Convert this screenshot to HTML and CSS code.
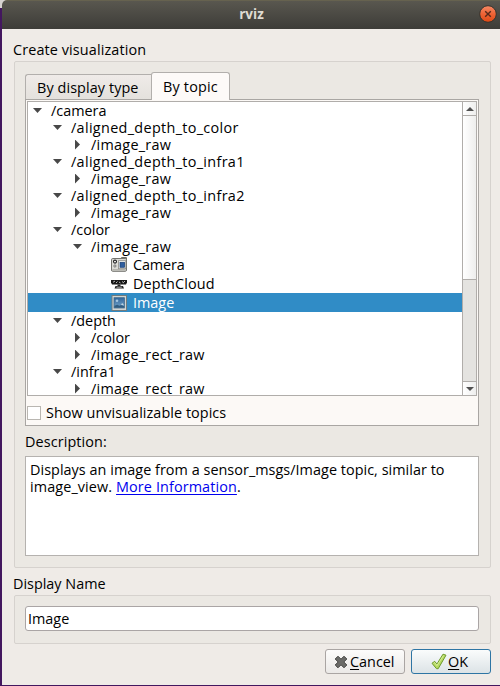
FILE: index.html
```
<!DOCTYPE html>
<html lang="en">
<head>
<meta charset="utf-8">
<title>rviz</title>
<link rel="stylesheet" href="styles.css">
</head>
<body>
<div class="window">
  <header class="titlebar">
    <span class="title">rviz</span>
    <svg class="close" width="18" height="18" viewBox="0 0 18 18">
      <defs><linearGradient id="orange" x1="0" y1="0" x2="0" y2="1"><stop offset="0" stop-color="#f58a66"/><stop offset=".5" stop-color="#ee6335"/><stop offset="1" stop-color="#dd4814"/></linearGradient></defs>
      <circle cx="9" cy="9" r="8.3" fill="url(#orange)" stroke="#35332d" stroke-width="1"/>
      <path d="M6.2 6.2l5.6 5.6M11.8 6.2l-5.6 5.6" stroke="#57291a" stroke-width="1.4"/>
    </svg>
  </header>
  <main class="content">
    <h2 class="heading create">Create visualization</h2>
    <section class="group visualization">
      <nav class="tabs">
        <div class="tab">By display type</div>
        <div class="tab active">By topic</div>
      </nav>
      <div class="pane">
        <div class="tree">
          <div class="rows">
            <div class="row l0"><i class="down"></i><span>/camera</span></div>
            <div class="row l1"><i class="down"></i><span class="aligned">/aligned_depth_to_color</span></div>
            <div class="row l2"><i class="right"></i><span class="snake">/image_raw</span></div>
            <div class="row l1"><i class="down"></i><span class="aligned">/aligned_depth_to_infra1</span></div>
            <div class="row l2"><i class="right"></i><span class="snake">/image_raw</span></div>
            <div class="row l1"><i class="down"></i><span class="aligned">/aligned_depth_to_infra2</span></div>
            <div class="row l2"><i class="right"></i><span class="snake">/image_raw</span></div>
            <div class="row l1"><i class="down"></i><span>/color</span></div>
            <div class="row l2"><i class="down"></i><span class="snake">/image_raw</span></div>
            <div class="row leaf">
              <svg width="16" height="16" viewBox="0 0 16 16">
                <path d="M10.5 1.5V.6h4.9V3" fill="#8a8a84" stroke="#62625d"/>
                <rect x=".5" y="1.5" width="15" height="12.8" rx="1.3" fill="#dcdcd7" stroke="#73736e"/>
                <path d="M1.5 12.8h13" stroke="#b5b4ae" stroke-width="1.6"/>
                <circle cx="4" cy="4.6" r="1.5" fill="#fff" stroke="#222" stroke-width="1.1"/>
                <circle cx="3.9" cy="9" r="1.1" fill="#f4f4f0" stroke="#666" stroke-width=".9"/>
                <rect x="7.5" y="3.7" width="7.3" height="8" fill="#f8f8f4" stroke="#8b8b86" stroke-width=".8"/>
                <rect x="9" y="5.3" width="4.6" height="5" fill="#2f5e9e" stroke="#173d73" stroke-width=".7"/>
              </svg><span class="camera">Camera</span>
            </div>
            <div class="row leaf">
              <svg width="16" height="16" viewBox="0 0 16 16">
                <path d="M0 4h16v2.5l-1 2H1l-1-2z" fill="#171717"/>
                <path d="M2 6.3l2-1.3M5 7l1.5-1.5M8 6l1.5 1M11 5.5l2 1.5M13 5l1 1" stroke="#ccc" stroke-width=".9"/>
                <path d="M6.5 8.5h3V10H12l1 2.6H3.5L4.5 10h2z" fill="#242424"/>
                <path d="M5.5 11.2h5.3" stroke="#bbb" stroke-width=".9"/>
              </svg><span class="cloud">DepthCloud</span>
            </div>
            <div class="row leaf selected">
              <svg width="16" height="16" viewBox="0 0 16 16">
                <defs><linearGradient id="sky" x1="0" y1="0" x2="0" y2="1"><stop offset="0" stop-color="#32659a"/><stop offset="1" stop-color="#75a7cc"/></linearGradient></defs>
                <rect x="1" y=".5" width="14.5" height="15" fill="#d0d5d4" stroke="#717b7d"/>
                <rect x="3" y="2.7" width="10.5" height="10.3" fill="url(#sky)" stroke="#396486" stroke-width=".7"/>
                <path d="M3.3 10.8l3-1 2.2 1 1.5-.8 3.2 1.2v1.5H3.3z" fill="#315c80"/>
                <path d="M10 9.8l1.2-1.8 1.8 2.3" fill="#c4d9e4"/><circle cx="6" cy="5.8" r="1.3" fill="#a3c7e2"/>
              </svg><span>Image</span>
            </div>
            <div class="row l1"><i class="down"></i><span>/depth</span></div>
            <div class="row l2"><i class="right"></i><span>/color</span></div>
            <div class="row l2"><i class="right"></i><span class="snake">/image_rect_raw</span></div>
            <div class="row l1"><i class="down"></i><span>/infra1</span></div>
            <div class="row l2"><i class="right"></i><span class="snake">/image_rect_raw</span></div>
          </div>
          <div class="scrollbar">
            <div class="step"><svg width="8" height="4" viewBox="0 0 8 4"><path d="M4 0l4 4H0z" fill="#505050"/></svg></div>
            <div class="thumb"></div>
            <div class="trough"></div>
            <div class="step"><svg width="8" height="4" viewBox="0 0 8 4"><path d="M0 0h8L4 4z" fill="#505050"/></svg></div>
          </div>
        </div>
        <label class="check"><span class="box"></span><span>Show unvisualizable topics</span></label>
      </div>
      <h3 class="heading description">Description:</h3>
      <div class="details">Displays an image from a sensor_msgs/Image topic, similar to<br><span class="second">image_view. <a class="link">More Information</a>.</span></div>
    </section>
    <h2 class="heading name">Display Name</h2>
    <section class="group naming"><div class="input">Image</div></section>
    <footer class="buttons">
      <div class="button cancel">
        <svg width="14" height="14" viewBox="0 0 14 14"><path d="M4 1.2l3 3 3-3 2.8 2.8-3 3 3 3-2.8 2.8-3-3-3 3L1.2 10l3-3-3-3z" fill="#6b6b68" stroke="#454543" stroke-linejoin="round"/></svg>
        <span><u>C</u>ancel</span>
      </div>
      <div class="button ok">
        <svg width="16" height="17" viewBox="0 0 16 17"><path d="M1 10.3l2.7-2 2.2 2.8L12 1.2l3 1L7.2 15.7H5.5z" fill="#b6da62" stroke="#6d9a2c" stroke-linejoin="round"/><path d="M2.6 10.2l1-.7 2.3 3.1 6.6-10" fill="none" stroke="#daf0a0" stroke-width=".9"/></svg>
        <span><u>O</u>K</span>
      </div>
    </footer>
  </main>
</div>
</body>
</html>
```
FILE: styles.css
```
* { box-sizing: border-box; }
body {
  margin: 0;
  height: 686px;
  padding: 0 0 1px 2px;
  overflow: hidden;
  background: linear-gradient(#d6d2d0 0 8px, #43175f 8px);
  color: #000;
  font: 14.4px/17px "Open Sans", "Noto Sans", sans-serif;
  white-space: nowrap;
}
.window { height: 685px; background: #efebe7; border-top-left-radius: 5px; overflow: hidden; }
.titlebar {
  height: 29px;
  display: grid;
  grid-template-columns: 1fr auto 1fr;
  align-items: center;
  padding: 0 3px 1px 0;
  background: linear-gradient(#66624f 0 1px, #59574f 1px, #3d3c38);
}
.title { grid-column: 2; padding-left: 4px; font-size: 13.5px; font-weight: 700; color: #dfdbd2; }
.close { justify-self: end; }
.content { padding: 12px 9px 0 12px; }
.heading { margin: 0 0 0 -1px; font-size: 14.4px; font-weight: 400; height: 20px; line-height: 17px; }
.create { letter-spacing: .12px; }
.group { border: 1px solid #d6d2ce; border-radius: 2px; background: #ebe8e3; padding: 10px 11px 0 10px; }
.visualization { height: 507px; }
.tabs { height: 27px; display: flex; align-items: flex-end; }
.tab {
  height: 25px;
  width: 126px;
  padding: 4px 0 0 11px;
  border: 1px solid #b2afac;
  border-right: 0;
  border-bottom: 0;
  border-radius: 3px 0 0 0;
  background: linear-gradient(#efebe8, #e4e1dd);
  letter-spacing: .09px;
}
.tab.active {
  position: relative;
  height: 28px;
  width: 79px;
  margin-bottom: -1px;
  padding: 5px 0 0 11px;
  border-right: 1px solid #b2afac;
  border-radius: 3px 3px 0 0;
  background: #fdfaf8;
  letter-spacing: .2px;
}
.pane { height: 327px; border: 1px solid #a9a6a3; background: #fcf9f6; padding: 1px; }
.tree { height: 295px; display: flex; border: 1px solid #b0adaa; background: #fff; overflow: hidden; }
.rows { flex: 1; overflow: hidden; }
.row { height: 17px; display: flex; align-items: center; }
.row i { flex: none; width: 9px; height: 10px; margin-right: 9px; background: #484848; }
.down { clip-path: polygon(0 25%, 100% 25%, 50% 75%); }
.right { clip-path: polygon(22% 0, 78% 50%, 22% 100%); }
.l0 { padding-left: 5px; }
.l1 { padding-left: 25px; }
.l2 { padding-left: 45px; }
.leaf { height: 19px; padding-left: 83px; gap: 6px; }
.leaf svg { flex: none; }
.selected { background: #308cc6; color: #fff; }
.snake { letter-spacing: .27px; }
.aligned { letter-spacing: .33px; }
.camera { letter-spacing: -.1px; }
.cloud { letter-spacing: .15px; }
.scrollbar { width: 14px; display: flex; flex-direction: column; border-left: 1px solid #b0adaa; }
.step { height: 13px; display: flex; align-items: center; justify-content: center; background: linear-gradient(90deg, #fff, #eeeeed); }
.thumb { height: 165px; border: solid #b0adaa; border-width: 1px 0; background: linear-gradient(90deg, #fff, #eeeeed); }
.trough { flex: 1; border-bottom: 1px solid #b0adaa; background: #e4e3e0; }
.check { display: flex; align-items: center; gap: 5px; padding-top: 8px; letter-spacing: .06px; }
.box { width: 14px; height: 14px; border: 1px solid #b9b6b1; background: #fff; }
.description { margin: 7px 0 0; height: 23px; letter-spacing: .1px; }
.details { height: 100px; border: 1px solid #b5b2af; background: #fff; padding: 4px; letter-spacing: .04px; }
.second { letter-spacing: .11px; }
.link { color: #00e; text-decoration: underline; text-underline-offset: 2px; }
.name { margin-top: 7px; }
.naming { height: 49px; }
.input { height: 25px; border: 1px solid #aaa5a5; border-radius: 3px; background: #fff; padding: 3px 2px; }
.buttons { display: flex; justify-content: flex-end; gap: 6px; padding-top: 5px; }
.button {
  width: 80px;
  height: 25px;
  display: flex;
  align-items: center;
  border: 1px solid #aaa5a3;
  border-radius: 3px;
  background: linear-gradient(#fdfcfb, #ebe9e7);
}
.button u { text-underline-offset: 2px; }
.cancel { padding-left: 8px; gap: 2px; }
.ok { padding-left: 19px; gap: 1px; border-color: #2e75a4; background: linear-gradient(#fafcfc, #dce3e6); }
```
